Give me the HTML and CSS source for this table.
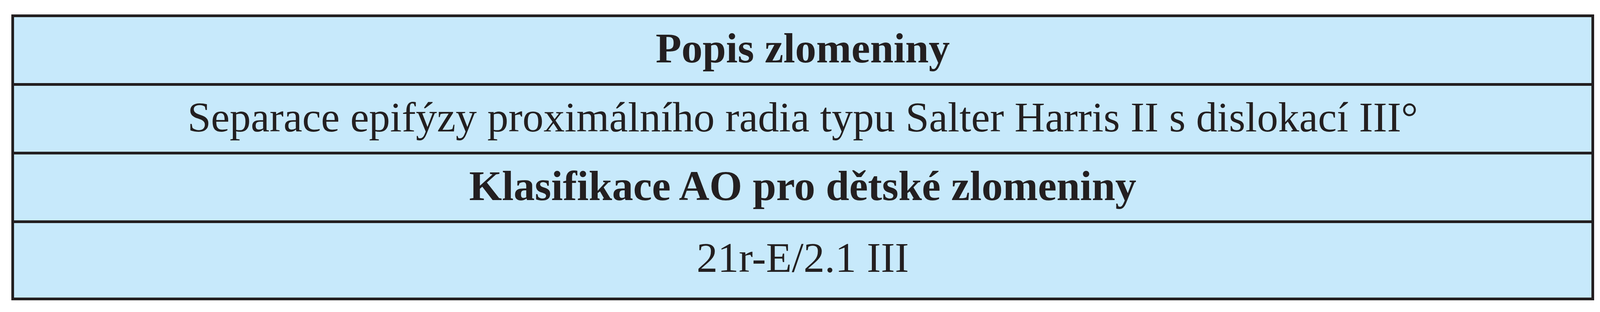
FILE: index.html
```html
<!DOCTYPE html>
<html lang="cs">
<head>
<meta charset="utf-8">
<title>Popis zlomeniny</title>
<link rel="stylesheet" href="styles.css">
</head>
<body>
<table class="fx-table">
  <tbody>
    <tr><th class="cell head r1">Popis zlomeniny</th></tr>
    <tr><td class="cell r2">Separace epifýzy proximálního radia typu Salter Harris II s dislokací III°</td></tr>
    <tr><th class="cell head r3">Klasifikace AO pro dětské zlomeniny</th></tr>
    <tr><td class="cell r4">21r-E/2.1 III</td></tr>
  </tbody>
</table>
</body>
</html>
```
FILE: styles.css
```css
html, body {
  background: #ffffff;
}
body {
  margin: 37px 15px 0 29px;
  font-family: "Liberation Serif", "Times New Roman", serif;
  color: #231f20;
}
.fx-table {
  box-sizing: border-box;
  width: 100%;
  border-collapse: separate;
  border-spacing: 0;
  border: 7px solid #231f20;
  background: #c7e9fb;
}
.cell {
  font-size: 108px;
  line-height: 159px;
  text-align: center;
  padding: 0;
  border-top: 7px solid #231f20;
}
.head {
  font-weight: bold;
}
.r1 {
  border-top: none;
  padding: 0 0 10px;
}
.r2 {
  padding: 1px 0 9px;
}
.r3 {
  padding: 1px 0 9px;
}
.r4 {
  padding: 9px 0 23px;
}
```
